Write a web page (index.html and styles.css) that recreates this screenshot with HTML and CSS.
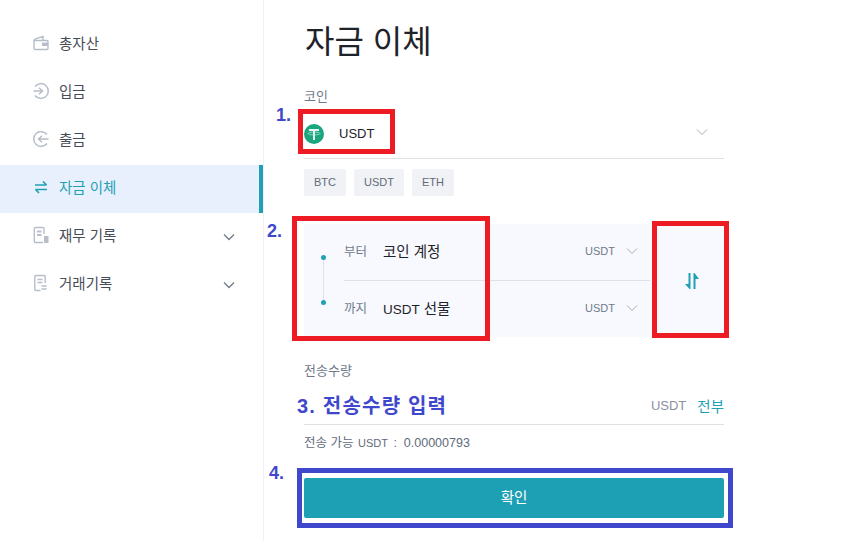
FILE: index.html
```html
<!DOCTYPE html>
<html lang="ko">
<head>
    <meta charset="UTF-8">
    <meta name="viewport" content="width=device-width, initial-scale=1.0">
    <title>자금 이체</title>
    <link rel="stylesheet" href="styles.css">
</head>
<body>
    <div class="page">
        <nav class="sidebar">
            <a class="nav-item">
                <svg class="nav-icon" viewBox="0 0 18 18"><path d="M2 6.5h13a1 1 0 0 1 1 1v7a1 1 0 0 1-1 1H3a1 1 0 0 1-1-1zM2 6.5c0-1 .6-1.4 1.5-1.7L11 2.5v4" fill="none" stroke="#b7bdc9" stroke-width="1.4"/><rect x="10" y="8.6" width="6" height="3.4" fill="#b7bdc9"/></svg>
                <span>총자산</span>
            </a>
            <a class="nav-item">
                <svg class="nav-icon" viewBox="0 0 18 18"><path d="M3 4.5A7.4 7.4 0 1 1 3 13.5M1.5 9H10M7 5.8 10.5 9 7 12.2" fill="none" stroke="#b7bdc9" stroke-width="1.5"/></svg>
                <span>입금</span>
            </a>
            <a class="nav-item">
                <svg class="nav-icon" viewBox="0 0 18 18"><path d="M15 4.5A7.4 7.4 0 1 0 15 13.5M16.5 9H7M10 5.8 6.5 9 10 12.2" fill="none" stroke="#b7bdc9" stroke-width="1.5"/></svg>
                <span>출금</span>
            </a>
            <a class="nav-item active">
                <svg class="nav-icon" viewBox="0 0 18 18"><path d="M3 7h11.5M11 3.5 14.5 7M15 11.5H3.5M7 15 3.5 11.5" fill="none" stroke="#1fa0b4" stroke-width="1.7"/></svg>
                <span>자금 이체</span>
            </a>
            <a class="nav-item">
                <svg class="nav-icon" viewBox="0 0 18 18"><path d="M11 16.5H3.5a1.2 1.2 0 0 1-1.2-1.2V2.7a1.2 1.2 0 0 1 1.2-1.2h7.3a1.2 1.2 0 0 1 1.2 1.2V8" fill="none" stroke="#b7bdc9" stroke-width="1.4"/><path d="M5 5.5h4.5M5 9h4.5" stroke="#b7bdc9" stroke-width="1.8"/><rect x="12" y="10" width="4.5" height="7" fill="#b7bdc9"/></svg>
                <span>재무 기록</span>
                <svg class="nav-caret" viewBox="0 0 12 8"><path d="M1 1.5 6 6.5 11 1.5" fill="none" stroke="#707a8a" stroke-width="1.3"/></svg>
            </a>
            <a class="nav-item">
                <svg class="nav-icon" viewBox="0 0 18 18"><path d="M8.5 16.5H4a1.2 1.2 0 0 1-1.2-1.2V2.7A1.2 1.2 0 0 1 4 1.5h8a1.2 1.2 0 0 1 1.2 1.2V9" fill="none" stroke="#b7bdc9" stroke-width="1.4"/><path d="M5.5 5.5h5M5.5 8.5h5M9.5 12h5M9.5 15h5" stroke="#b7bdc9" stroke-width="1.4"/></svg>
                <span>거래기록</span>
                <svg class="nav-caret" viewBox="0 0 12 8"><path d="M1 1.5 6 6.5 11 1.5" fill="none" stroke="#707a8a" stroke-width="1.3"/></svg>
            </a>
        </nav>

        <main class="content">
            <h1 class="title">자금 이체</h1>

            <div class="field-label">코인</div>
            <div class="coin-select">
                <svg class="coin-logo" viewBox="0 0 20 20"><circle cx="10" cy="10" r="10" fill="#1aa67f"/><path d="M5 5h10v2h-4v9H9V7H5z" fill="#e6f6f1"/><ellipse cx="10" cy="9.5" rx="6" ry="1.4" fill="none" stroke="#bfe8dc" stroke-width=".7"/></svg>
                <span class="coin-name">USDT</span>
                <svg class="caret" viewBox="0 0 12 8"><path d="M1 1.5 6 6.5 11 1.5" fill="none" stroke="#a5acb9" stroke-width="1"/></svg>
            </div>
            <div class="chips">
                <span class="chip">BTC</span>
                <span class="chip">USDT</span>
                <span class="chip">ETH</span>
            </div>

            <div class="transfer">
                <div class="track"><i class="dot"></i><i class="line"></i><i class="dot"></i></div>
                <div class="accounts">
                    <div class="account">
                        <span class="account-label">부터</span>
                        <span class="account-name">코인 계정</span>
                        <span class="account-coin">USDT</span>
                        <svg class="caret" viewBox="0 0 12 8"><path d="M1 1.5 6 6.5 11 1.5" fill="none" stroke="#a5acb9" stroke-width="1"/></svg>
                    </div>
                    <div class="account">
                        <span class="account-label">까지</span>
                        <span class="account-name"><span class="latin">USDT</span> 선물</span>
                        <span class="account-coin">USDT</span>
                        <svg class="caret" viewBox="0 0 12 8"><path d="M1 1.5 6 6.5 11 1.5" fill="none" stroke="#a5acb9" stroke-width="1"/></svg>
                    </div>
                </div>
                <div class="swap">
                    <svg viewBox="0 0 16 18" width="16" height="18"><path d="M4.5 1h2v16h-1L1 12h3.5z" fill="#1fa0b4"/><path d="M9.5 17h2V7H15L10.5 1h-1z" fill="#1fa0b4"/></svg>
                </div>
            </div>

            <div class="field-label amount-label">전송수량</div>
            <div class="amount">
                <span class="amount-coin">USDT</span>
                <span class="amount-all">전부</span>
            </div>
            <div class="available">전송 가능 <span class="available-coin">USDT</span> :&nbsp; 0.00000793</div>
            <button class="submit">확인</button>
        </main>
    </div>

    <!-- annotations drawn over the page -->
    <div class="mark mark-coin"></div>
    <div class="mark mark-from"></div>
    <div class="mark mark-swap"></div>
    <div class="mark mark-submit"></div>
    <div class="step step-1">1.</div>
    <div class="step step-2">2.</div>
    <div class="step step-3">3. 전송수량 입력</div>
    <div class="step step-4">4.</div>
</body>
</html>
```

FILE: styles.css
```css
* {
    box-sizing: border-box;
}
html, body {
    margin: 0;
    height: 100%;
    overflow: hidden;
}
body {
    position: relative;
    background-color: #fff;
    color: #1e2329;
    font-family: "Liberation Sans", "Noto Sans CJK KR", sans-serif;
}
.page {
    display: flex;
    height: 541px;
}
.sidebar {
    width: 264px;
    flex-shrink: 0;
    padding-top: 21px;
    border-right: 1px solid #eef0f2;
}
.nav-item {
    display: flex;
    align-items: center;
    height: 48px;
    padding: 0 28px 5px 32px;
    font-size: 14.5px;
    color: #474d57;
}
.nav-item.active {
    background-color: #e8f0fd;
    border-right: 4px solid #1fa0b4;
    color: #1fa0b4;
}
.nav-icon {
    width: 18px;
    height: 18px;
    margin-right: 9px;
    flex-shrink: 0;
}
.nav-caret {
    width: 12px;
    height: 8px;
    margin-left: auto;
    margin-top: 4px;
}
.content {
    width: 420px;
    margin-left: 40px;
}
.title {
    margin: 0;
    height: 89px;
    padding: 19px 0 0 1px;
    font-size: 32px;
    line-height: 46px;
    font-weight: 400;
}
.field-label {
    height: 16px;
    font-size: 13px;
    line-height: 16px;
    color: #707a8a;
}
.coin-select {
    display: flex;
    align-items: center;
    height: 54px;
    padding-top: 5px;
    border-bottom: 1px solid #dfe1e5;
}
.coin-logo {
    width: 20px;
    height: 20px;
}
.coin-name {
    margin-left: 15px;
    margin-bottom: 2px;
    font-size: 13px;
}
.caret {
    width: 12px;
    height: 8px;
    margin-left: auto;
    margin-right: 16px;
}
.coin-select .caret {
    margin-bottom: 4px;
}
.chips {
    display: flex;
    gap: 8px;
    margin-top: 10px;
}
.chip {
    height: 27px;
    padding: 0 10px;
    border-radius: 2px;
    background-color: #f0f2f6;
    color: #5f6b7a;
    font-size: 11px;
    line-height: 27px;
}
.transfer {
    display: flex;
    height: 113px;
    margin-top: 28px;
    background-color: #f8f9fe;
}
.track {
    display: flex;
    flex-direction: column;
    align-items: center;
    width: 38px;
    margin-right: 2px;
    padding-top: 31px;
}
.dot {
    width: 5px;
    height: 5px;
    border-radius: 50%;
    background-color: #1fa0b4;
    flex-shrink: 0;
}
.line {
    width: 1px;
    height: 40px;
    background-color: #dfe1e8;
}
.accounts {
    width: 306px;
}
.account {
    display: flex;
    align-items: center;
    height: 56px;
    padding-bottom: 3px;
}
.account:first-child {
    height: 57px;
    border-bottom: 1px solid #dfe1e8;
}
.account-label {
    width: 39px;
    font-size: 12.5px;
    color: #707a8a;
}
.account-name {
    font-size: 14.5px;
}
.latin {
    font-size: 13.5px;
}
.account-coin {
    margin-left: auto;
    font-size: 11px;
    color: #707a8a;
}
.account .caret {
    margin-left: 11px;
    margin-right: 12px;
}
.swap {
    flex: 1;
    display: flex;
    justify-content: center;
    align-items: center;
    padding-left: 10px;
}
.amount-label {
    margin-top: 26px;
}
.amount {
    display: flex;
    justify-content: flex-end;
    align-items: center;
    gap: 11px;
    height: 46px;
    padding-top: 7px;
    border-bottom: 1px solid #dfe1e5;
}
.amount-coin {
    font-size: 13px;
    color: #8a92a0;
}
.amount-all {
    font-size: 14.5px;
    color: #1fa0b4;
}
.available {
    margin-top: 10px;
    height: 16px;
    font-size: 12.5px;
    line-height: 16px;
    color: #5f6b7a;
}
.available-coin {
    margin: 0 2px 0 1px;
    font-size: 11px;
}
.submit {
    display: block;
    width: 100%;
    height: 40px;
    margin-top: 27px;
    padding-bottom: 5px;
    border: 0;
    border-radius: 2px;
    background-color: #1ea0b4;
    color: #fff;
    font-family: inherit;
    font-size: 14.5px;
}

/* red and blue boxes and step numbers lying over the screenshot */
.mark {
    position: absolute;
    border: 5px solid #ed1c24;
}
.mark-coin {
    left: 298px;
    top: 109px;
    width: 97px;
    height: 45px;
}
.mark-from {
    left: 292px;
    top: 216px;
    width: 198px;
    height: 125px;
}
.mark-swap {
    left: 652px;
    top: 221px;
    width: 77px;
    height: 117px;
}
.mark-submit {
    left: 297px;
    top: 468px;
    width: 436px;
    height: 60px;
    border-color: #3f48cc;
}
.step {
    position: absolute;
    color: #3f48cc;
    font-size: 18px;
    line-height: 22px;
    font-weight: 700;
}
.step-1 {
    left: 276px;
    top: 104px;
}
.step-2 {
    left: 267px;
    top: 220px;
}
.step-3 {
    left: 297px;
    top: 395px;
    font-size: 20px;
    letter-spacing: 1.2px;
}
.step-4 {
    left: 269px;
    top: 462px;
}
```
